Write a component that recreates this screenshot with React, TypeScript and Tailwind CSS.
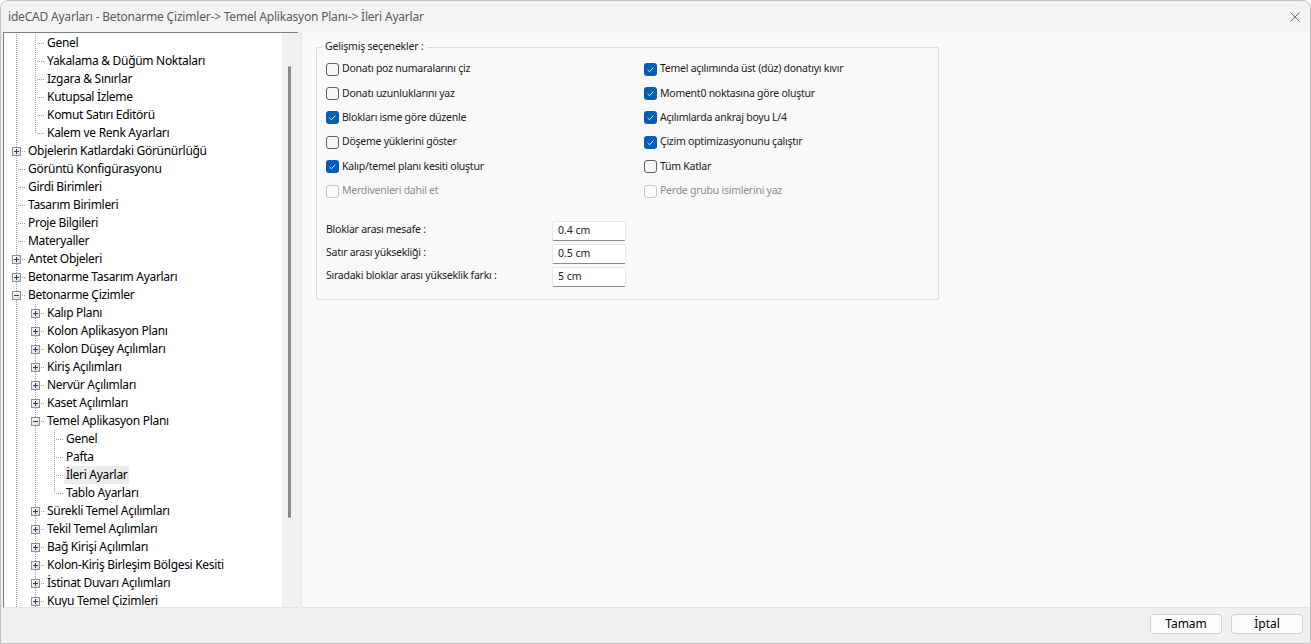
import clsx from 'clsx';

type TreeNode = {
  label: string;
  level: number;
  kind: 'leaf' | 'plus' | 'minus';
  last?: boolean;
  guides: boolean[];
  selected?: boolean;
};

const treeRows: TreeNode[] = [
  { label: 'Genel', level: 1, kind: 'leaf', guides: [true] },
  { label: 'Yakalama & Düğüm Noktaları', level: 1, kind: 'leaf', guides: [true] },
  { label: 'Izgara & Sınırlar', level: 1, kind: 'leaf', guides: [true] },
  { label: 'Kutupsal İzleme', level: 1, kind: 'leaf', guides: [true] },
  { label: 'Komut Satırı Editörü', level: 1, kind: 'leaf', guides: [true] },
  { label: 'Kalem ve Renk Ayarları', level: 1, kind: 'leaf', last: true, guides: [true] },
  { label: 'Objelerin Katlardaki Görünürlüğü', level: 0, kind: 'plus', guides: [] },
  { label: 'Görüntü Konfigürasyonu', level: 0, kind: 'leaf', guides: [] },
  { label: 'Girdi Birimleri', level: 0, kind: 'leaf', guides: [] },
  { label: 'Tasarım Birimleri', level: 0, kind: 'leaf', guides: [] },
  { label: 'Proje Bilgileri', level: 0, kind: 'leaf', guides: [] },
  { label: 'Materyaller', level: 0, kind: 'leaf', guides: [] },
  { label: 'Antet Objeleri', level: 0, kind: 'plus', guides: [] },
  { label: 'Betonarme Tasarım Ayarları', level: 0, kind: 'plus', guides: [] },
  { label: 'Betonarme Çizimler', level: 0, kind: 'minus', guides: [] },
  { label: 'Kalıp Planı', level: 1, kind: 'plus', guides: [true] },
  { label: 'Kolon Aplikasyon Planı', level: 1, kind: 'plus', guides: [true] },
  { label: 'Kolon Düşey Açılımları', level: 1, kind: 'plus', guides: [true] },
  { label: 'Kiriş Açılımları', level: 1, kind: 'plus', guides: [true] },
  { label: 'Nervür Açılımları', level: 1, kind: 'plus', guides: [true] },
  { label: 'Kaset Açılımları', level: 1, kind: 'plus', guides: [true] },
  { label: 'Temel Aplikasyon Planı', level: 1, kind: 'minus', guides: [true] },
  { label: 'Genel', level: 2, kind: 'leaf', guides: [true, true] },
  { label: 'Pafta', level: 2, kind: 'leaf', guides: [true, true] },
  { label: 'İleri Ayarlar', level: 2, kind: 'leaf', guides: [true, true], selected: true },
  { label: 'Tablo Ayarları', level: 2, kind: 'leaf', last: true, guides: [true, true] },
  { label: 'Sürekli Temel Açılımları', level: 1, kind: 'plus', guides: [true] },
  { label: 'Tekil Temel Açılımları', level: 1, kind: 'plus', guides: [true] },
  { label: 'Bağ Kirişi Açılımları', level: 1, kind: 'plus', guides: [true] },
  { label: 'Kolon-Kiriş Birleşim Bölgesi Kesiti', level: 1, kind: 'plus', guides: [true] },
  { label: 'İstinat Duvarı Açılımları', level: 1, kind: 'plus', guides: [true] },
  { label: 'Kuyu Temel Çizimleri', level: 1, kind: 'plus', guides: [true] },
];

const dot = '#a0a0a0';

const GuideCell = () => (
  <svg width="19" height="18" className="shrink-0" shapeRendering="crispEdges">
    <line x1="9.5" y1="0" x2="9.5" y2="18" stroke={dot} strokeDasharray="1 1" />
  </svg>
);

const ConnectorCell = ({ kind, last }: { kind: TreeNode['kind']; last?: boolean }) => (
  <svg width="19" height="18" className="shrink-0" shapeRendering="crispEdges">
    <line x1="9.5" y1="0" x2="9.5" y2={last ? 10 : 18} stroke={dot} strokeDasharray="1 1" />
    <line x1="10" y1="9.5" x2="19" y2="9.5" stroke={dot} strokeDasharray="1 1" strokeDashoffset="1" />
    {kind !== 'leaf' && (
      <>
        <defs>
          <linearGradient id="boxfill" x1="0" y1="0" x2="1" y2="1">
            <stop offset="0" stopColor="#ffffff" />
            <stop offset="1" stopColor="#d6d6d6" />
          </linearGradient>
        </defs>
        <rect x="5.5" y="5.5" width="8" height="8" fill="url(#boxfill)" stroke="#8e8f8f" />
        <line x1="7" y1="9.5" x2="12" y2="9.5" stroke="#2a3f6d" />
        {kind === 'plus' && <line x1="9.5" y1="7" x2="9.5" y2="12" stroke="#2a3f6d" />}
      </>
    )}
  </svg>
);

const TreeRow = ({ node }: { node: TreeNode }) => (
  <div className="flex h-[18px] items-center">
    {node.guides.map((g, i) => (g ? <GuideCell key={i} /> : <div key={i} className="w-[19px] shrink-0" />))}
    <ConnectorCell kind={node.kind} last={node.last} />
    <span
      className={clsx(
        'h-[18px] leading-[18px] px-[2px] whitespace-nowrap text-[12px] tracking-[-0.3px] text-black',
        node.selected && 'bg-[#ececec]'
      )}
    >
      {node.label}
    </span>
  </div>
);

const Checkbox = ({ checked, disabled }: { checked?: boolean; disabled?: boolean }) => (
  <span
    className={clsx(
      'w-[13px] h-[13px] rounded-[3px] flex items-center justify-center shrink-0',
      checked
        ? 'bg-[#005fb8]'
        : disabled
          ? 'border border-[#c6c6c6] bg-[#fbfbfb]'
          : 'border border-[#5f5f5f] bg-[#f6f6f6]'
    )}
  >
    {checked && (
      <svg width="13" height="13" viewBox="0 0 13 13">
        <path d="M3.6 6.9 L5.5 8.7 L9.4 4.6" fill="none" stroke="#ffffff" strokeWidth="0.9" />
      </svg>
    )}
  </span>
);

const Option = ({ label, checked, disabled }: { label: string; checked?: boolean; disabled?: boolean }) => (
  <div className="flex items-center gap-[3px] h-[24.4px]">
    <Checkbox checked={checked} disabled={disabled} />
    <span
      className={clsx(
        'text-[10.5px] tracking-[-0.25px] whitespace-nowrap',
        disabled ? 'text-[#8d8d8d]' : 'text-[#1b1b1b]'
      )}
    >
      {label}
    </span>
  </div>
);

const leftOptions = [
  { label: 'Donatı poz numaralarını çiz' },
  { label: 'Donatı uzunluklarını yaz' },
  { label: 'Blokları isme göre düzenle', checked: true },
  { label: 'Döşeme yüklerini göster' },
  { label: 'Kalıp/temel planı kesiti oluştur', checked: true },
  { label: 'Merdivenleri dahil et', disabled: true },
];

const rightOptions = [
  { label: 'Temel açılımında üst (düz) donatıyı kıvır', checked: true },
  { label: 'Moment0 noktasına göre oluştur', checked: true },
  { label: 'Açılımlarda ankraj boyu L/4', checked: true },
  { label: 'Çizim optimizasyonunu çalıştır', checked: true },
  { label: 'Tüm Katlar' },
  { label: 'Perde grubu isimlerini yaz', disabled: true },
];

const fields = [
  { label: 'Bloklar arası mesafe :', value: '0.4 cm' },
  { label: 'Satır arası yüksekliği :', value: '0.5 cm' },
  { label: 'Sıradaki bloklar arası yükseklik farkı :', value: '5 cm' },
];

export default function App() {
  return (
    <div className="w-[1311px] h-[644px] flex flex-col bg-[#f0f0f0] border border-[#c2c2c2] rounded-t-[8px] overflow-hidden font-['Noto_Sans',sans-serif]">
      {/* title bar */}
      <div className="h-[31px] shrink-0 flex items-center justify-between pl-[7px] pr-[10px] bg-[#f3f3f3]">
        <span className="text-[12px] tracking-[-0.2px] text-[#5b5b5b] whitespace-nowrap">
          ideCAD Ayarları - Betonarme Çizimler-&gt; Temel Aplikasyon Planı-&gt; İleri Ayarlar
        </span>
        <svg width="10" height="10" viewBox="0 0 10 10">
          <path d="M0.5 0.5 L9.5 9.5 M9.5 0.5 L0.5 9.5" stroke="#6e6e6e" strokeWidth="1" />
        </svg>
      </div>

      <div className="flex-1 flex min-h-0">
        {/* tree panel */}
        <div className="ml-[2px] w-[295px] flex border-t border-l border-[#7f7f7f] border-b border-b-[#e3e3e3] bg-white">
          <div className="flex-1 overflow-hidden pt-[1px] pl-[3px]">
            {treeRows.map((n, i) => (
              <TreeRow key={i} node={n} />
            ))}
          </div>
          <div className="w-[16px] shrink-0 bg-[#f0f0f0] flex justify-center pt-[33px]">
            <div className="w-[3px] h-[452px] rounded-full bg-[#8a8a8a] ml-[-1px]" />
          </div>
        </div>

        {/* right panel */}
        <div className="ml-[3px] flex-1 bg-[#f9f9f9] border-l border-[#e3e3e3] border-b border-b-[#e3e3e3] pl-[14px] pt-[15px]">
          <div className="relative w-[623px] h-[253px] border border-[#dcdcdc] rounded-[2px] pl-[9px] pt-[9px]">
            <span className="absolute -top-[9px] left-[5px] px-[3px] bg-[#f9f9f9] text-[10.5px] tracking-[-0.2px] text-[#1b1b1b] whitespace-nowrap">
              Gelişmiş seçenekler :
            </span>
            <div className="flex">
              <div className="w-[318px] flex flex-col">
                {leftOptions.map((o) => (
                  <Option key={o.label} {...o} />
                ))}
              </div>
              <div className="flex flex-col">
                {rightOptions.map((o) => (
                  <Option key={o.label} {...o} />
                ))}
              </div>
            </div>
            <div className="mt-[17px] flex flex-col gap-[2px]">
              {fields.map((f) => (
                <div key={f.label} className="flex items-center h-[21px]">
                  <span className="w-[226px] text-[10.5px] tracking-[-0.25px] text-[#1b1b1b] whitespace-nowrap -mt-[2px]">
                    {f.label}
                  </span>
                  <div className="w-[74px] h-[20px] bg-white border border-[#e6e6e6] border-b-[#8b8b8b] rounded-[2px] flex items-center pl-[5px] text-[10.5px] text-[#1b1b1b]">
                    {f.value}
                  </div>
                </div>
              ))}
            </div>
          </div>
        </div>
      </div>

      {/* bottom bar */}
      <div className="h-[35px] shrink-0 flex items-center justify-end gap-[9px] pr-[7px] pb-[3px]">
        <button className="w-[72px] h-[20px] rounded-[4px] border border-[#d0d0d0] bg-[#fdfdfd] text-[12px] text-black leading-none">
          Tamam
        </button>
        <button className="w-[72px] h-[20px] rounded-[4px] border border-[#d0d0d0] bg-[#fdfdfd] text-[12px] text-black leading-none">
          İptal
        </button>
      </div>
    </div>
  );
}
